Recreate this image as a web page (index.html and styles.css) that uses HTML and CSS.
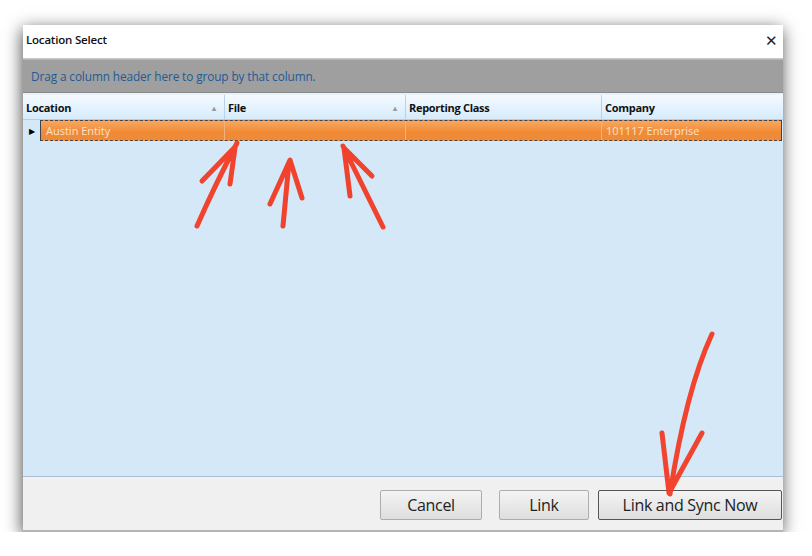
FILE: index.html
```html
<!DOCTYPE html>
<html lang="en">
<head>
    <meta charset="UTF-8">
    <meta name="viewport" content="width=device-width, initial-scale=1.0">
    <title>Location Select</title>
    <link rel="stylesheet" href="styles.css">
</head>
<body>
    <div class="dialog">
        <div class="title-bar">
            <span class="title">Location Select</span>
            <span class="close">&#x2715;</span>
        </div>
        <div class="group-panel">Drag a column header here to group by that column.</div>
        <div class="grid">
            <div class="grid-header">
                <div class="col col-location">Location <span class="sort">&#x25B4;</span></div>
                <div class="col col-file">File <span class="sort">&#x25B4;</span></div>
                <div class="col col-class">Reporting Class</div>
                <div class="col col-company">Company</div>
            </div>
            <div class="grid-row">
                <div class="indicator">&#x25B6;</div>
                <div class="cells">
                    <div class="cell cell-location">Austin Entity</div>
                    <div class="cell col-file"></div>
                    <div class="cell col-class"></div>
                    <div class="cell col-company">101117 Enterprise</div>
                </div>
            </div>
            <div class="grid-body"></div>
        </div>
        <div class="footer">
            <button class="btn btn-cancel">Cancel</button>
            <button class="btn btn-link">Link</button>
            <button class="btn btn-sync">Link and Sync Now</button>
        </div>
    </div>

    <!-- red marker annotations drawn over the screenshot -->
    <svg class="marks" width="812" height="556" viewBox="0 0 812 556">
        <g fill="none" stroke="#f23a22" stroke-width="5" stroke-linecap="round" stroke-linejoin="round" opacity="0.95">
            <path d="M197 226 Q215 185 237 143 M202 181 L235 147 M230 184 L235 148"/>
            <path d="M283 226 L289 162 M270 204 L290 160 L302 198"/>
            <path d="M383 227 L343 146 M350 196 L344 148 L372 176"/>
            <path d="M712 334 Q686 390 670 494 M662 433 L669 493 L702 433"/>
        </g>
    </svg>
</body>
</html>
```

FILE: styles.css
```css
body {
    margin: 0;
    padding: 25px 0 0 23px;
    background-color: #fff;
    font-family: "Open Sans", "Noto Sans", Arial, sans-serif;
}

.dialog {
    width: 760px;
    height: 507px;
    display: flex;
    flex-direction: column;
    background-color: #f0f0f0;
    box-shadow: -1px 4px 16px rgba(0, 0, 0, 0.7);
}

.title-bar {
    height: 34px;
    display: flex;
    align-items: center;
    justify-content: space-between;
    padding: 0 5px 4px 3px;
    box-sizing: border-box;
    background-color: #fff;
    border-bottom: 1px solid #c8c8c8;
}

.title {
    font-size: 11.5px;
    font-weight: 600;
    color: #111;
    letter-spacing: -0.2px;
}

.close {
    font-size: 15px;
    color: #222;
}

.group-panel {
    height: 32px;
    display: flex;
    align-items: center;
    padding-left: 8px;
    background-color: #9f9f9f;
    border-top: 1px solid #b6b6b6;
    border-bottom: 1px solid #8a8a8a;
    font-size: 11.8px;
    color: #1f5a95;
    letter-spacing: -0.1px;
}

.grid {
    flex: 1;
    display: flex;
    flex-direction: column;
    border-top: 2px solid #e8f2fb;
    background-color: #d4e8f8;
}

.grid-header {
    height: 24px;
    display: flex;
    background: linear-gradient(#f5faff, #d6ebfb);
    border-bottom: 1px solid #b8cfe3;
}

.col {
    display: flex;
    align-items: center;
    justify-content: space-between;
    padding: 0 8px 0 3px;
    font-size: 11px;
    font-weight: 700;
    color: #111;
    letter-spacing: -0.3px;
    border-right: 1px solid #b9d3ea;
    box-sizing: border-box;
}

.sort {
    font-size: 8px;
    color: #999;
}

.col-location { width: 202px; }
.col-file { width: 181px; }
.col-class { width: 196px; }
.col-company { flex: 1; border-right: none; }

.grid-row {
    height: 21px;
    display: flex;
}

.indicator {
    width: 17px;
    display: flex;
    align-items: center;
    justify-content: center;
    font-size: 8px;
    color: #000;
}

.cells {
    flex: 1;
    display: flex;
    margin-right: 1px;
    background: linear-gradient(#f6a862, #f08a34 60%, #ee8a3a);
    border-top: 1px dashed #3b4654;
    border-bottom: 1px dashed #3b4654;
    border-left: 1px solid #3b4654;
    border-right: 1px solid #3b4654;
    box-sizing: border-box;
}

.cell {
    display: flex;
    align-items: center;
    padding-left: 5px;
    font-size: 11px;
    color: #fbe2c8;
    border-right: 1px solid #f3b27a;
    box-sizing: border-box;
}

.cell-location { width: 184px; }
.cells .col-company { border-right: none; padding-left: 4px; }

.grid-body {
    flex: 1;
    border-bottom: 1px solid #a9bfd3;
}

.footer {
    height: 50px;
    display: flex;
    align-items: center;
    justify-content: flex-end;
    gap: 17px;
    padding: 3px 1px 0 0;
    border-bottom: 2px solid #b5b5b5;
}

.btn {
    height: 30px;
    font-family: "Open Sans", "Noto Sans", Arial, sans-serif;
    font-size: 16px;
    color: #222;
    letter-spacing: -0.3px;
    background: linear-gradient(#f4f4f4, #dedede);
    border: 1px solid #adadad;
    border-radius: 2px;
    padding: 0;
}

.btn-cancel { width: 102px; }
.btn-link { width: 90px; }
.btn-sync { width: 184px; border-color: #555; margin-left: -8px; }

.marks {
    position: absolute;
    left: 0;
    top: 0;
    pointer-events: none;
}
```
